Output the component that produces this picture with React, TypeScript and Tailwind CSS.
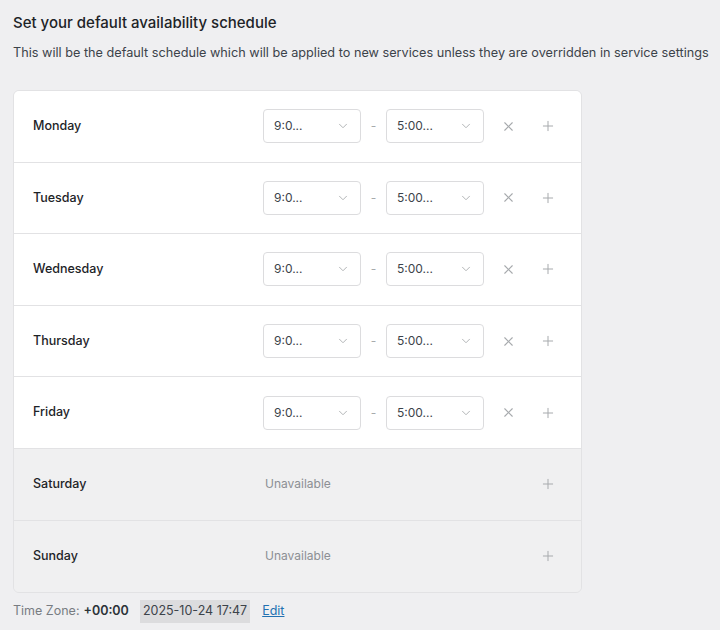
import { ChevronDown, Plus, X } from "lucide-react"

type Day = { name: string; open: boolean }

const days: Day[] = [
  { name: "Monday", open: true },
  { name: "Tuesday", open: true },
  { name: "Wednesday", open: true },
  { name: "Thursday", open: true },
  { name: "Friday", open: true },
  { name: "Saturday", open: false },
  { name: "Sunday", open: false },
]

const TimeSelect: React.FC<{ value: string }> = ({ value }) => (
  <div className="flex items-center justify-between w-[98px] h-[34px] px-[10px] bg-white border border-[#dcdcde] rounded-[4px] text-[12px] text-[#3c434a]">
    <span>{value}</span>
    <ChevronDown className="size-[14px] text-[#a7aaad]" strokeWidth={1.5} />
  </div>
)

const DayRow: React.FC<{ day: Day; last: boolean }> = ({ day, last }) => (
  <div
    className={`flex items-center h-[71.6px] pl-[19px] pr-[25px] ${day.open ? "bg-white" : "bg-[#f0f0f1]"} ${last ? "" : "border-b border-[#e2e2e4]"}`}
  >
    <span className="w-[232px] text-[12.5px] font-medium text-[#1d2327]">{day.name}</span>
    {day.open ? (
      <div className="flex items-center flex-1">
        <TimeSelect value="9:0..." />
        <span className="w-[25px] text-center text-[12px] text-[#a7aaad]">-</span>
        <TimeSelect value="5:00..." />
        <button className="ml-[16px] size-[16px] flex items-center justify-center text-[#a7aaad]">
          <X className="size-[15px]" strokeWidth={1.75} />
        </button>
        <button className="ml-[24px] size-[16px] flex items-center justify-center text-[#a7aaad]">
          <Plus className="size-[16px]" strokeWidth={1.5} />
        </button>
      </div>
    ) : (
      <div className="flex items-center flex-1">
        <span className="flex-1 text-[12px] text-[#8c8f94]">Unavailable</span>
        <button className="size-[16px] flex items-center justify-center text-[#a7aaad]">
          <Plus className="size-[16px]" strokeWidth={1.5} />
        </button>
      </div>
    )}
  </div>
)

export default function App() {
  return (
    <div
      className="w-[720px] h-[630px] bg-[#efeff1] px-[13px] pt-[13px] overflow-hidden"
      style={{ fontFamily: "Inter, 'Liberation Sans', sans-serif" }}
    >
      <h2 className="text-[15px] font-medium text-[#1d2327] leading-[20px]">
        Set your default availability schedule
      </h2>
      <p className="mt-[11px] text-[12.7px] text-[#3c434a] leading-[17px] whitespace-nowrap">
        This will be the default schedule which will be applied to new services unless they are overridden in service settings
      </p>
      <div className="mt-[29px] w-[569px] border border-[#e2e2e4] rounded-[6px] overflow-hidden">
        {days.map((d, i) => (
          <DayRow key={d.name} day={d} last={i === days.length - 1} />
        ))}
      </div>
      <div className="mt-[7px] flex items-center text-[12.5px] text-[#787c82]">
        <span>Time Zone:</span>
        <span className="ml-[4px] font-semibold text-[#2c3338]">+00:00</span>
        <span className="ml-[11px] px-[3px] py-[2px] bg-[#dcdcde] text-[#3c434a]">2025-10-24 17:47</span>
        <a href="#" className="ml-[12px] text-[#2271b1] underline">Edit</a>
      </div>
    </div>
  )
}
